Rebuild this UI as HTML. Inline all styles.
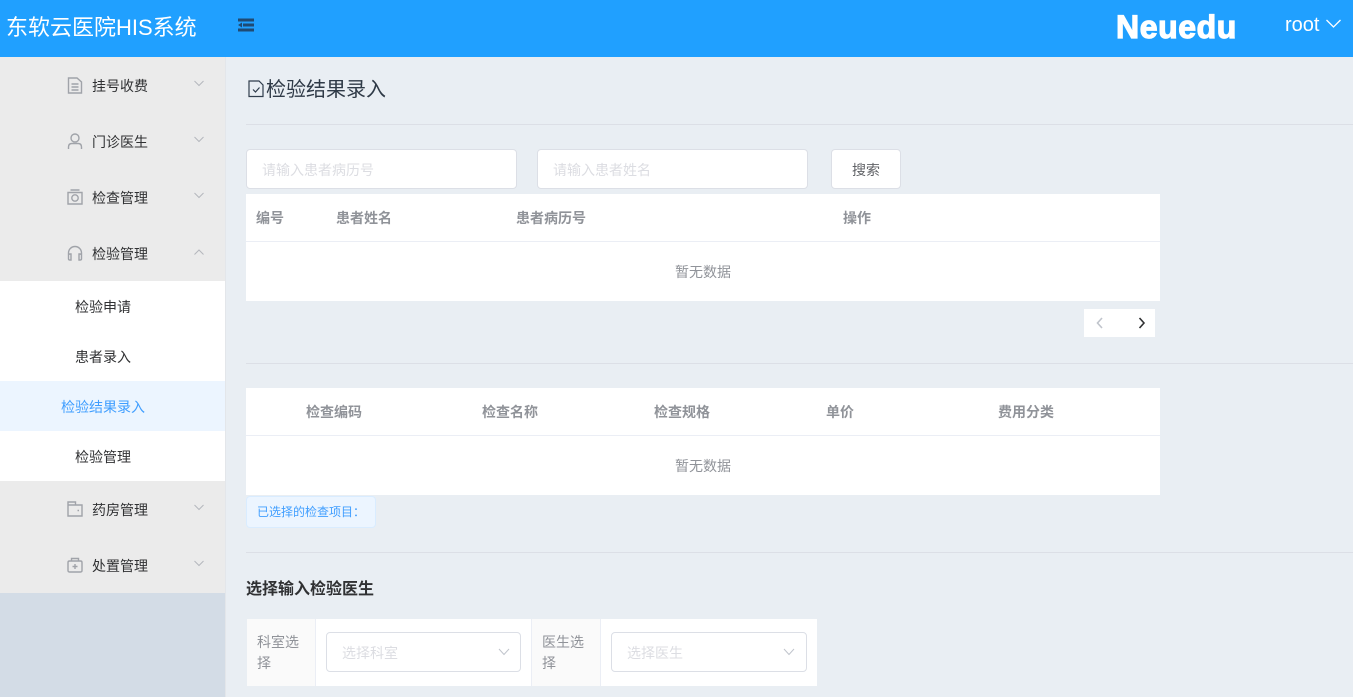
<!DOCTYPE html>
<html lang="zh"><head><meta charset="utf-8"><title>检验结果录入</title>
<style>
*{box-sizing:border-box}
html,body{margin:0;padding:0;width:1353px;height:697px;overflow:hidden;background:#e9eef3;font-family:"Liberation Sans","Noto Sans CJK SC",sans-serif;font-size:14px}
.a{position:absolute;white-space:nowrap}
.r{position:absolute}
svg{position:absolute;overflow:visible;fill:none}
.m{left:92px;color:#303133;line-height:20px}
.s{color:#303133;line-height:20px}
.th{color:#909399;font-weight:bold;line-height:20px}
.hr{position:absolute;left:246px;width:1107px;height:1px;background:#dcdfe6}
.inp{position:absolute;background:#fff;border:1px solid #dcdfe6;border-radius:4px}
.ph{color:#dcdde2;line-height:20px}
.ic{stroke:#a0a3a9;stroke-width:1.4}
.ch{stroke:#b4b7bd;stroke-width:1}
</style></head><body>
<div class="r" style="left:0;top:0;width:1353px;height:57px;background:#20a0ff"></div>
<div class="a" style="left:6px;top:12px;font-size:22px;line-height:32px;color:#fff">东软云医院HIS系统</div>
<svg style="left:237px;top:17px" width="18" height="16"><path d="M1 3H17M6 8H17M1 13H17" stroke="#1f4a73" stroke-width="3"/><path d="M5 5.500V10.500L1 8Z" fill="#1f4a73"/></svg>
<div class="a" style="left:1116px;top:8px;font-size:32px;line-height:38px;font-weight:bold;color:#fff;letter-spacing:.6px;-webkit-text-stroke:1.200px #fff">Neuedu</div>
<div class="a" style="left:1285px;top:13px;font-size:20px;line-height:24px;color:#fff">root</div>
<svg style="left:1326px;top:19px" width="15" height="10"><path d="M.5 1L7.500 8L14.500 1" stroke="#fff" stroke-width="1.300"/></svg>

<div class="r" style="left:0;top:57px;width:225px;height:224px;background:#ebebeb"></div>
<div class="r" style="left:0;top:281px;width:225px;height:100px;background:#fff"></div>
<div class="r" style="left:0;top:381px;width:225px;height:50px;background:#ecf5ff"></div>
<div class="r" style="left:0;top:431px;width:225px;height:50px;background:#fff"></div>
<div class="r" style="left:0;top:481px;width:225px;height:112px;background:#ebebeb"></div>
<div class="r" style="left:0;top:593px;width:225px;height:104px;background:#d3dce6"></div>
<div class="r" style="left:225px;top:57px;width:1px;height:640px;background:#e3e6ea"></div>

<svg style="left:67px;top:77px" width="16" height="17" class="ic"><path d="M1.500 1H10L14.500 5V16H1.500ZM4.500 7H11.500M4.500 10H11.500M4.500 13H11.500"/></svg>
<div class="a m" style="top:76px">挂号收费</div>
<svg style="left:194px;top:80px" width="10" height="7" class="ch"><path d="M.5 1L5 5.500L9.500 1"/></svg>
<svg style="left:67px;top:133px" width="16" height="17" class="ic"><circle cx="8" cy="5" r="4"/><path d="M1.500 16V14Q1.500 10.500 5 10.500H11Q14.500 10.500 14.500 14V16"/></svg>
<div class="a m" style="top:132px">门诊医生</div>
<svg style="left:194px;top:136px" width="10" height="7" class="ch"><path d="M.5 1L5 5.500L9.500 1"/></svg>
<svg style="left:67px;top:189px" width="16" height="16" class="ic"><path d="M1 3.500H15V15H1ZM3.500 1H12.500"/><circle cx="8" cy="9" r="3.200"/></svg>
<div class="a m" style="top:188px">检查管理</div>
<svg style="left:194px;top:192px" width="10" height="7" class="ch"><path d="M.5 1L5 5.500L9.500 1"/></svg>
<svg style="left:67px;top:245px" width="16" height="16" class="ic"><path d="M1.500 10V8A6.500 6.500 0 0 1 14.500 8V10M1.500 10Q1.500 9 3 9H4V15H3Q1.500 15 1.500 14ZM14.500 10Q14.500 9 13 9H12V15H13Q14.500 15 14.500 14Z"/></svg>
<div class="a m" style="top:244px">检验管理</div>
<svg style="left:194px;top:249px" width="10" height="7" class="ch"><path d="M.5 5.500L5 1L9.500 5.500"/></svg>

<div class="a s" style="left:75px;top:297px">检验申请</div>
<div class="a s" style="left:75px;top:347px">患者录入</div>
<div class="a s" style="left:61px;top:397px;color:#409eff">检验结果录入</div>
<div class="a s" style="left:75px;top:447px">检验管理</div>

<svg style="left:67px;top:501px" width="16" height="16" class="ic"><path d="M1 1H8.500V4H15V15H1ZM1 4H8.500"/><path d="M10.500 9.500H12" stroke-width="1.500"/></svg>
<div class="a m" style="top:500px">药房管理</div>
<svg style="left:194px;top:504px" width="10" height="7" class="ch"><path d="M.5 1L5 5.500L9.500 1"/></svg>
<svg style="left:67px;top:557px" width="16" height="16" class="ic"><path d="M2.500 4H13.500Q15 4 15 5.500V13.500Q15 15 13.500 15H2.500Q1 15 1 13.500V5.500Q1 4 2.500 4ZM4.500 4V1.500H11.500V4M8 7V12M5.500 9.500H10.500"/></svg>
<div class="a m" style="top:556px">处置管理</div>
<svg style="left:194px;top:560px" width="10" height="7" class="ch"><path d="M.5 1L5 5.500L9.500 1"/></svg>

<svg style="left:248px;top:80px" width="17" height="18" stroke="#303d4d" stroke-width="1.200"><path d="M1 1H11L15 5V16.500H1ZM5 9.500L7.500 12L11.500 7.500"/></svg>
<div class="a" style="left:266px;top:77px;font-size:20px;line-height:26px;color:#2f3a47">检验结果录入</div>
<div class="hr" style="top:124px"></div>

<div class="inp" style="left:246px;top:149px;width:271px;height:40px"></div>
<div class="a ph" style="left:262px;top:160px">请输入患者病历号</div>
<div class="inp" style="left:537px;top:149px;width:271px;height:40px"></div>
<div class="a ph" style="left:553px;top:160px">请输入患者姓名</div>
<div class="inp" style="left:831px;top:149px;width:70px;height:40px"></div>
<div class="a" style="left:852px;top:160px;line-height:20px;color:#606266">搜索</div>

<div class="r" style="left:246px;top:194px;width:914px;height:107px;background:#fff"></div>
<div class="r" style="left:246px;top:241px;width:914px;height:1px;background:#ebeef5"></div>
<div class="a th" style="left:256px;top:208px">编号</div>
<div class="a th" style="left:336px;top:208px">患者姓名</div>
<div class="a th" style="left:516px;top:208px">患者病历号</div>
<div class="a th" style="left:843px;top:208px">操作</div>
<div class="a" style="left:675px;top:262px;line-height:20px;color:#909399">暂无数据</div>

<div class="r" style="left:1084px;top:309px;width:71px;height:28px;background:#fff"></div>
<svg style="left:1096px;top:317px" width="8" height="12" stroke="#c0c4cc" stroke-width="1.600"><path d="M6 1L1.500 6L6 11"/></svg>
<svg style="left:1138px;top:317px" width="8" height="12" stroke="#303133" stroke-width="1.600"><path d="M1.500 1L6 6L1.500 11"/></svg>

<div class="hr" style="top:363px"></div>

<div class="r" style="left:246px;top:388px;width:914px;height:107px;background:#fff"></div>
<div class="r" style="left:246px;top:435px;width:914px;height:1px;background:#ebeef5"></div>
<div class="a th" style="left:306px;top:402px">检查编码</div>
<div class="a th" style="left:482px;top:402px">检查名称</div>
<div class="a th" style="left:654px;top:402px">检查规格</div>
<div class="a th" style="left:826px;top:402px">单价</div>
<div class="a th" style="left:998px;top:402px">费用分类</div>
<div class="a" style="left:675px;top:456px;line-height:20px;color:#909399">暂无数据</div>

<div class="r" style="left:246px;top:496px;width:130px;height:32px;background:#ecf5ff;border:1px solid #d9ecff;border-radius:4px"></div>
<div class="a" style="left:257px;top:503px;font-size:12px;line-height:18px;color:#409eff">已选择的检查项目：</div>

<div class="hr" style="top:552px"></div>
<div class="a" style="left:246px;top:579px;font-size:16px;line-height:22px;font-weight:bold;color:#303133">选择输入检验医生</div>

<div class="r" style="left:247px;top:619px;width:570px;height:67px;background:#fff"></div>
<div class="r" style="left:247px;top:619px;width:69px;height:67px;background:#fafafa;border-right:1px solid #ebeef5"></div>
<div class="r" style="left:531px;top:619px;width:70px;height:67px;background:#fafafa;border-left:1px solid #ebeef5;border-right:1px solid #ebeef5"></div>
<div class="a" style="left:257px;top:632px;line-height:21px;color:#909399">科室选<br>择</div>
<div class="a" style="left:542px;top:632px;line-height:21px;color:#909399">医生选<br>择</div>
<div class="inp" style="left:326px;top:632px;width:195px;height:40px"></div>
<div class="a ph" style="left:342px;top:643px">选择科室</div>
<svg style="left:498px;top:648px" width="12" height="8" stroke="#c0c4cc" stroke-width="1"><path d="M1 1L6 6.500L11 1"/></svg>
<div class="inp" style="left:611px;top:632px;width:196px;height:40px"></div>
<div class="a ph" style="left:627px;top:643px">选择医生</div>
<svg style="left:783px;top:648px" width="12" height="8" stroke="#c0c4cc" stroke-width="1"><path d="M1 1L6 6.500L11 1"/></svg>
</body></html>
